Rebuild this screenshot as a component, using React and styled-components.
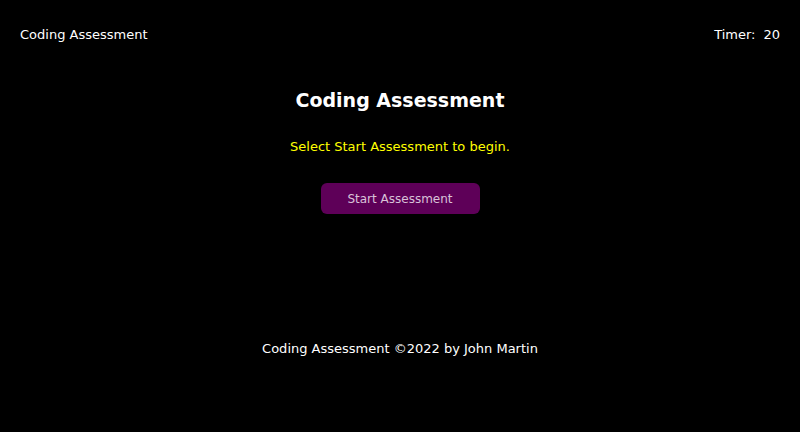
import React from "react";
import styled, { createGlobalStyle } from "styled-components";

const Global = createGlobalStyle`
  body {
    margin: 0;
    background: #000;
    color: #fff;
    font-family: "DejaVu Sans", Verdana, sans-serif;
  }
`;

export default function App() {
  return (
    <Page>
      <Global />
      <Header>
        <span>Coding Assessment</span>
        <Timer>
          Timer: <span>20</span>
        </Timer>
      </Header>
      <Main>
        <H1>Coding Assessment</H1>
        <Intro>Select Start Assessment to begin.</Intro>
        <StartBtn>Start Assessment</StartBtn>
      </Main>
      <Footer>Coding Assessment ©2022 by John Martin</Footer>
    </Page>
  );
}

const Page = styled.div`
  width: 800px;
  height: 432px;
  background: #000;
  display: flex;
  flex-direction: column;
`;
const Header = styled.header`
  display: flex;
  justify-content: space-between;
  align-items: center;
  padding: 26px 20px 0 20px;
  height: 16px;
  font-size: 13px;
`;
const Timer = styled.div`
  display: flex;
  gap: 8px;
`;
const Main = styled.main`
  display: flex;
  flex-direction: column;
  align-items: center;
  padding-top: 46px;
`;
const H1 = styled.h1`
  margin: 0;
  font-size: 19px;
  font-weight: bold;
  line-height: 24px;
`;
const Intro = styled.p`
  margin: 26px 0 0;
  color: #ffff00;
  font-size: 13px;
  line-height: 18px;
`;
const StartBtn = styled.button`
  margin-top: 27px;
  width: 159px;
  height: 31px;
  border: none;
  border-radius: 6px;
  background: #5e0058;
  color: #d9c2d8;
  font-family: inherit;
  font-size: 12px;
`;
const Footer = styled.footer`
  margin-top: 127px;
  text-align: center;
  font-size: 13px;
`;
